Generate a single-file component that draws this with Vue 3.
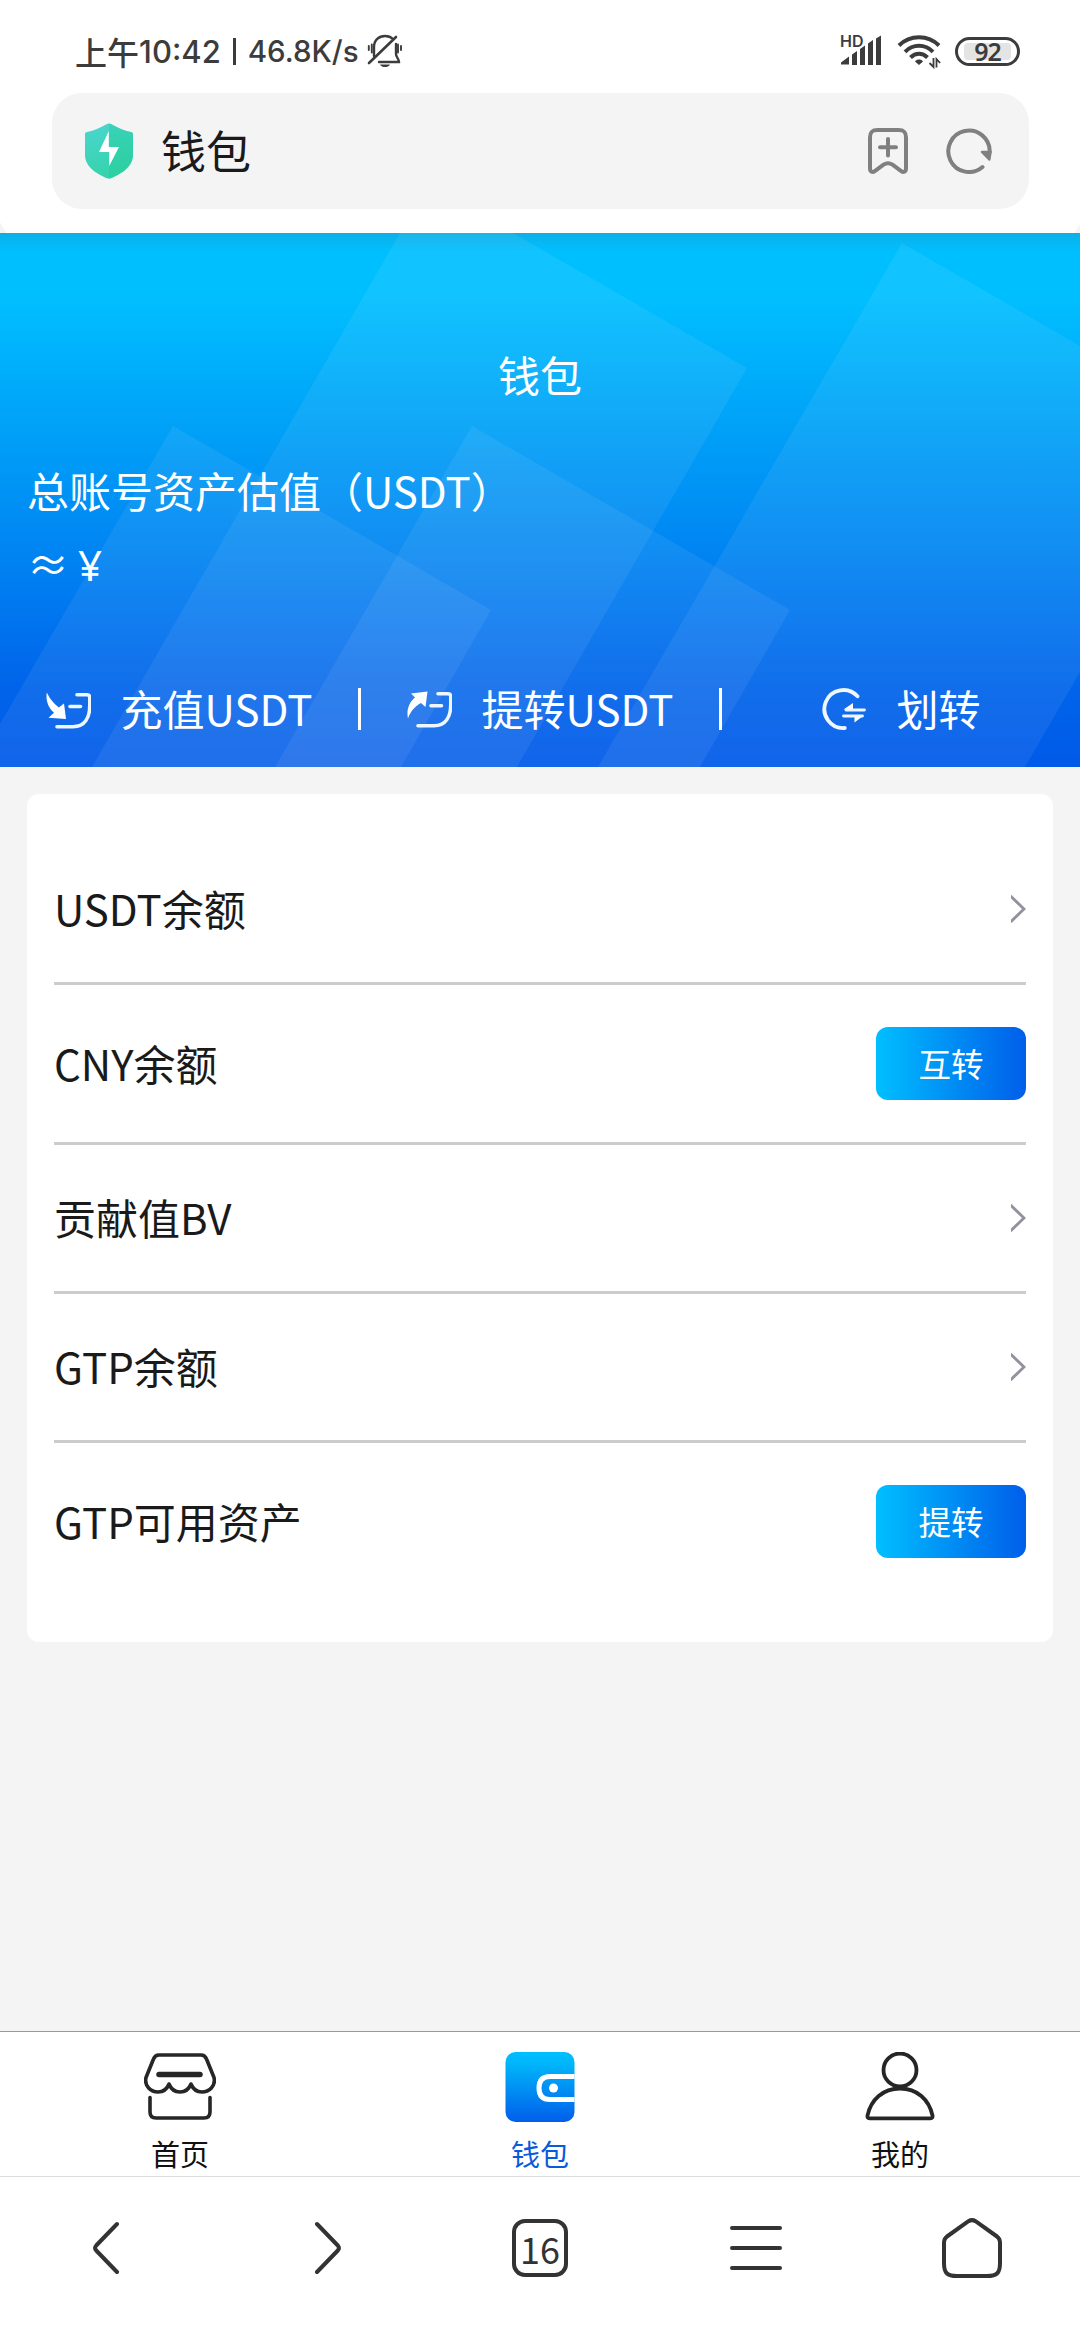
<script setup>
const actions = [
  { id: 'in', label: '充值USDT' },
  { id: 'out', label: '提转USDT' },
  { id: 'swap', label: '划转' },
]
const rows = [
  { label: 'USDT余额' },
  { label: 'CNY余额', button: '互转' },
  { label: '贡献值BV' },
  { label: 'GTP余额' },
  { label: 'GTP可用资产', button: '提转' },
]
const tabs = [
  { id: 'home', label: '首页' },
  { id: 'wallet', label: '钱包', active: true },
  { id: 'me', label: '我的' },
]
</script>

<template>
  <div class="screen">
    <header class="status">
      <div class="status-left">
        <span class="meridiem">上午</span><span class="clock">10:42</span>
        <span class="bar"></span>
        <span class="speed">46.8K/s</span>
        <svg class="mute" width="36" height="34" viewBox="0 0 36 34" fill="none" stroke="#3c3c3c" stroke-width="2.4" stroke-linecap="round">
          <path d="M7 22V13C7 6 12 2 18 2c3 0 6 1 8 3M29 10v10c0 3 3 5 3 8H12" />
          <path d="M29 3L2 29" stroke-width="2.6" />
          <path d="M1.8 12v4M4.8 10.500v8M31 10.500v8M34 12v4" stroke-width="1.900" />
          <path d="M13 30.500h10c-1 2-3 2.500-5 2.500s-4-.5-5-2.500z" fill="#3c3c3c" stroke="none" />
        </svg>
      </div>
      <div class="status-right">
        <div class="signal">
          <span class="hd">HD</span>
          <svg width="44" height="34" viewBox="0 0 44 34" fill="#3c3c3c">
            <path d="M1 30.500v-2l8-6v8zM12 31V20.500l5-3.500v14zM20 31V15l5-3.500V31zM28 31V9.500L33 6v25zM36 31V4.500L41 1.500V31z" />
          </svg>
        </div>
        <svg class="wifi" width="44" height="36" viewBox="0 0 44 36" fill="none" stroke="#3c3c3c" stroke-width="4">
          <path d="M2 12.500C13 1.500 31 1.500 42 12.500" />
          <path d="M8 18.800c8-8 20-8 28 0" />
          <path d="M13.500 24.500c5-5 12-5 17 0" />
          <path d="M22 32l-4-3.600c2-2.400 6-2.400 8 0z" fill="#3c3c3c" stroke="none" />
          <path d="M36.500 25v9l-4-4M39.500 34.500v-8.500l3.600 4" stroke-width="1.800" />
        </svg>
        <span class="battery"><span class="level">92</span></span>
      </div>
    </header>

    <div class="address">
      <svg width="50" height="56" viewBox="0 0 50 56">
        <defs>
          <linearGradient id="shield" x1="0" y1="0" x2="0.3" y2="1">
            <stop offset="0" stop-color="#4bd6d0" /><stop offset="1" stop-color="#35d3ab" />
          </linearGradient>
        </defs>
        <path d="M25 0.500c1 0 1.500.3 2.500.8C34 5 40 7.500 47 9c1.500.4 2 1 2 2.500V32c0 12-12 19-22 23.200-1.500.6-2.500.6-4 0C13 51 1 44 1 32V11.500C1 10 1.500 9.400 3 9 10 7.500 16 5 22.500 1.300 23.500.8 24 .5 25 .5z" fill="url(#shield)" />
        <path d="M25 .5c1 0 1.500.3 2.500.8C34 5 40 7.500 47 9c1.500.4 2 1 2 2.500V32c0 12-12 19-22 23.200-.8.3-1.400.4-2 .4z" fill="#19c98f" opacity=".3" />
        <path d="M24.800 8v16H35L25.200 43V29H15z" fill="#fff" />
      </svg>
      <span class="address-title">钱包</span>
      <svg class="bookmark" width="40" height="46" viewBox="0 0 40 46" fill="none" stroke="#808080" stroke-width="4" stroke-linejoin="round" stroke-linecap="round">
        <path d="M2 9.500C2 4 4 2 9.500 2h21C36 2 38 4 38 9.500V41c0 2.600-2.500 3.600-4.500 2.300l-9-6.600c-3.300-2.200-5.700-2.200-9 0l-9 6.600C4.500 44.600 2 43.600 2 41z" />
        <path d="M20 11v16.500M12 19.300h16" />
      </svg>
      <svg class="reload" width="46" height="46" viewBox="0 0 46 46" fill="none" stroke="#808080" stroke-width="4" stroke-linecap="round">
        <path d="M36.500 39A20.700 20.700 0 1 1 43.700 24" />
        <path d="M36 24h8.500l-1.200 7.500z" fill="#808080" stroke-width="2.500" stroke-linejoin="round" />
      </svg>
    </div>

    <section class="hero">
      <svg class="hero-bg" width="1080" height="534" viewBox="0 0 1080 534">
        <g fill="#fff" fill-opacity=".065">
          <path d="M400 0h113l234 135-230 399H92z" />
          <path d="M902 10l178 103v326l-55 95H598z" />
          <path d="M173 193l318 184-90 157H0V491z" />
          <path d="M472 193l318 184-90 157H275z" />
        </g>
      </svg>
      <h1>钱包</h1>
      <p class="total">总账号资产估值（USDT）</p>
      <p class="approx">≈ ¥</p>
      <nav class="actions">
        <div v-for="a in actions" :key="a.id" class="action">
          <svg v-if="a.id === 'in'" width="45" height="42" viewBox="0 0 45 42" fill="none" stroke="#eef6ff" stroke-width="3.600" stroke-linecap="round">
            <path d="M31 6.800h10q2.800 0 2.800 2.800v7.400C43.800 29.500 39 38.700 27 38.700H11" />
            <path d="M24 18.500h10.500" />
            <path d="M.8 4.500C4 11 7.500 15 12.800 19.500L18 15.500 20 31 2.500 29.700 8 24.800C2 19.500-.5 12 .8 4.500z" fill="#fff" stroke="none" />
          </svg>
          <svg v-else-if="a.id === 'out'" width="45" height="42" viewBox="0 0 45 42" fill="none" stroke="#eef6ff" stroke-width="3.600" stroke-linecap="round">
            <path d="M31 5.800h10q2.800 0 2.800 2.800v7.400C43.800 28.500 39 37.800 27 37.800H11" />
            <path d="M24 17.800h10.500" />
            <path d="M1 30.500C-.8 22 2 14.500 8 9.500L4 5.500l16.500-2L18.500 19 14 15C8 18.500 3.500 23 1 30.500z" fill="#fff" stroke="none" />
          </svg>
          <svg v-else width="45" height="44" viewBox="0 0 45 44" fill="none" stroke="#eef6ff" stroke-width="3.800" stroke-linecap="round">
            <path d="M36.500 9.300A19 19 0 1 0 23.800 41" />
            <path d="M22.500 22.500L32 16v6.500zM42 29l-8.500 6.500V29z" fill="#fff" stroke="none" />
            <path d="M25 23h18.500M22.500 29h19" stroke-width="2.800" />
          </svg>
          <span>{{ a.label }}</span>
        </div>
      </nav>
    </section>

    <main class="content">
      <section class="card">
        <div v-for="r in rows" :key="r.label" class="row" :class="{ tall: r.button }">
          <span class="name">{{ r.label }}</span>
          <button v-if="r.button">{{ r.button }}</button>
          <svg v-else width="15" height="28" viewBox="0 0 15 28" fill="none" stroke="#92929f" stroke-width="2.900">
            <path d="M-.5 1L13 14-.5 27" />
          </svg>
        </div>
      </section>
    </main>

    <nav class="tabbar">
      <div v-for="t in tabs" :key="t.id" class="tab" :class="{ active: t.active }">
        <svg v-if="t.id === 'home'" width="72" height="72" viewBox="0 0 72 72" fill="none" stroke="#262626" stroke-width="3.600" stroke-linecap="round" stroke-linejoin="round">
          <path d="M15 3h42q4 0 5.500 4L70 25.500C72 34 65 40 58 40c-5 0-9-3-11-8-2 5-6 8-11 8s-9-3-11-8c-2 5-6 8-11 8C7 40 0 34 2 25.500L9.500 7Q11 3 15 3z" />
          <path d="M15 22.500h41" stroke-width="5.500" />
          <path d="M6 45.500V60q0 6 6 6h48q6 0 6-6V45.500" />
        </svg>
        <svg v-else-if="t.id === 'wallet'" width="72" height="72" viewBox="0 0 72 72">
          <defs>
            <linearGradient id="purse" x1="0" y1="0" x2="0" y2="1">
              <stop offset="0" stop-color="#00bfff" /><stop offset=".15" stop-color="#00b7fb" /><stop offset="1" stop-color="#005eea" />
            </linearGradient>
          </defs>
          <rect x="1.500" y="0" width="69" height="70" rx="10" fill="url(#purse)" />
          <path d="M70.500 24.500H46q-11 0-11 11.500t11 11.500h24.500" fill="none" stroke="#fff" stroke-width="5" />
          <circle cx="49.500" cy="36" r="4.500" fill="#fff" />
        </svg>
        <svg v-else width="72" height="72" viewBox="0 0 72 72" fill="none" stroke="#262626" stroke-width="3.800" stroke-linejoin="round">
          <circle cx="36" cy="18" r="16.500" />
          <path d="M36 36.500c17 0 29 11 32.500 27 .4 2-.4 2.800-2 2.800h-61c-1.600 0-2.400-.8-2-2.800C7 47.500 19 36.500 36 36.500z" />
        </svg>
        <span>{{ t.label }}</span>
      </div>
    </nav>

    <footer class="browser">
      <div class="cell back">
        <svg width="28" height="54" viewBox="0 0 28 54"><path d="M25 3L4.200 24.500q-2.200 2.500 0 5L25 51" /></svg>
      </div>
      <div class="cell forward">
        <svg width="28" height="54" viewBox="0 0 28 54"><path d="M3 3l20.800 21.500q2.200 2.500 0 5L3 51" /></svg>
      </div>
      <div class="cell"><span class="count">16</span></div>
      <div class="cell">
        <svg width="52" height="46" viewBox="0 0 52 46"><path d="M2 3h48M2 23h48M2 43h48" /></svg>
      </div>
      <div class="cell">
        <svg width="60" height="60" viewBox="0 0 60 60"><path d="M26.500 3.200q3.500-2.200 7 0L55 18.500q3 2.300 3 6V45c0 10-3 13-13 13H15C5 58 2 55 2 45V24.500q0-3.700 3-6z" /></svg>
      </div>
    </footer>
  </div>
</template>

<style>
body {
  background: #f4f4f4;
}
</style>

<style scoped>
* {
  box-sizing: border-box;
  margin: 0;
}
.screen {
  width: 1080px;
  height: 2340px;
  display: flex;
  flex-direction: column;
  background: #f4f4f4;
  font-family: "Noto Sans CJK SC", sans-serif;
  font-size: 42px;
  color: #1a1a1a;
  overflow: hidden;
}
svg {
  display: block;
  flex: none;
}
.status {
  flex: none;
  height: 93px;
  padding: 9px 60px 0 75px;
  background: #fff;
  display: flex;
  justify-content: space-between;
  align-items: center;
  color: #3c3c3c;
  font-weight: 500;
}
.status-left,
.status-right {
  display: flex;
  align-items: center;
}
.meridiem {
  font-size: 32px;
  line-height: 44px;
}
.clock,
.speed {
  font-family: Inter, sans-serif;
  font-size: 31px;
}
.speed {
  font-size: 29.5px;
}
.bar {
  width: 3px;
  height: 27px;
  margin: 0 12px;
  background: #3c3c3c;
}
.mute {
  margin-left: 8px;
}
.signal {
  display: grid;
}
.signal > * {
  grid-area: 1 / 1;
}
.hd {
  font: 600 16px/14px Inter, sans-serif;
}
.wifi {
  margin: 0 14px 0 13px;
}
.battery {
  width: 65px;
  height: 29px;
  border: 3px solid #3c3c3c;
  border-radius: 15px;
  padding: 3px 6px;
}
.level {
  display: flex;
  height: 17px;
  align-items: center;
  justify-content: center;
  background: #e4e4e4;
  border-radius: 4px;
  font: 600 25px/17px "Noto Sans", sans-serif;
  letter-spacing: -1px;
}
.address {
  flex: none;
  height: 116px;
  margin: 0 51px 0 52px;
  padding: 0 37px 0 32px;
  display: flex;
  align-items: center;
  background: #f4f4f4;
  border-radius: 30px;
  box-shadow: 0 0 0 60px #fff;
  clip-path: inset(0 -60px -24px -60px);
  font-size: 45px;
}
.address-title {
  flex: 1;
  margin-left: 27px;
  padding-bottom: 3px;
}
.bookmark {
  margin-right: 38px;
}
.hero {
  position: relative;
  flex: none;
  height: 534px;
  margin-top: 24px;
  padding-top: 110px;
  color: #fff;
  background: linear-gradient(rgba(40, 140, 170, 0.3), transparent 18px),
    linear-gradient(#00bfff 12%, #00a3f8 35%, #0082f2 62%, #0064ea 85%, #005ae9);
  display: flex;
  flex-direction: column;
}
.hero-bg {
  position: absolute;
  inset: 0;
}
.hero h1,
.hero p,
.actions {
  position: relative;
}
.hero h1 {
  font-size: 42px;
  font-weight: 400;
  line-height: 62px;
  text-align: center;
}
.hero p {
  padding-left: 27px;
  line-height: 62px;
}
.hero .total {
  margin-top: 54px;
}
.hero .approx {
  margin-top: 13px;
  font-family: "Noto Sans", "Noto Sans CJK SC", sans-serif;
  word-spacing: -2px;
}
.actions {
  display: flex;
  margin-top: 92px;
}
.action {
  width: 361px;
  height: 42px;
  display: flex;
  align-items: center;
  justify-content: center;
  gap: 30px;
  border-right: 3px solid #fff;
}
.action span {
  padding-bottom: 3px;
}
.action:last-child {
  width: 358px;
  border: 0;
}
.content {
  flex: 1;
  padding: 27px 27px 0;
}
.card {
  padding: 42px 27px;
  background: #fff;
  border-radius: 12px;
}
.row {
  display: flex;
  justify-content: space-between;
  align-items: center;
  height: 149px;
  border-bottom: 3px solid #ccc;
}
.name {
  padding-bottom: 4px;
}
.row.tall {
  height: 160px;
}
.row.tall .name {
  padding-bottom: 2px;
}
.row:last-child {
  height: 157px;
  border: 0;
}
button {
  width: 150px;
  height: 73px;
  border: 0;
  border-radius: 12px;
  padding: 0 0 2px;
  background: linear-gradient(to right, #00bfff, #005eea);
  color: #fff;
  font: 32.5px "Noto Sans CJK SC", sans-serif;
}
.tabbar {
  flex: none;
  height: 145px;
  display: flex;
  background: #fff;
  border-top: 1px solid #999;
}
.tab {
  flex: 1;
  padding-top: 20px;
  display: flex;
  flex-direction: column;
  align-items: center;
  gap: 5px;
  font-size: 29px;
  line-height: 48px;
  color: #111;
}
.active {
  color: #0a5adc;
}
.browser {
  flex: none;
  height: 164px;
  padding-bottom: 21px;
  display: flex;
  background: #fff;
  border-top: 1px solid #ddd;
}
.cell {
  width: 216px;
  display: flex;
  align-items: center;
  justify-content: center;
  fill: none;
  stroke: #333;
  stroke-width: 4;
  stroke-linecap: round;
  stroke-linejoin: round;
}
.back {
  padding-right: 4px;
}
.forward {
  padding-left: 8px;
}
.count {
  width: 56px;
  height: 58px;
  border: 4px solid #333;
  border-radius: 13px;
  font: 36px/50px "Noto Sans CJK SC", sans-serif;
  text-align: center;
  color: #333;
}
</style>
